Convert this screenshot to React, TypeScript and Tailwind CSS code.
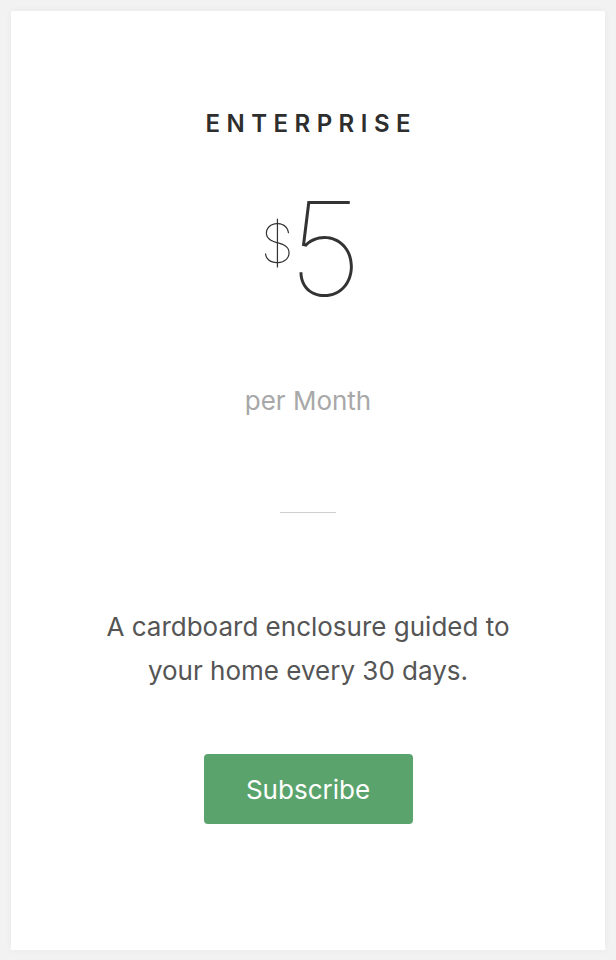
import React from 'react';

const App: React.FC = () => {
    return (
        <div className="min-h-[960px] w-full bg-[#f2f2f2] px-[11px] py-[11px]" style={{ fontFamily: 'Inter, "Liberation Sans", sans-serif' }}>
            <div className="flex h-[939px] flex-col items-center bg-white pt-[101px] shadow-[0_0_8px_rgba(0,0,0,0.04)]">
                <h2 className="pl-[0.27em] text-[24px] font-semibold leading-none tracking-[0.27em] text-[#2e2e2e]">
                    ENTERPRISE
                </h2>
                <div className="mt-[47px] ml-[7px] flex items-start text-[#333]">
                    <span className="mt-[34px] text-[54px] font-thin leading-none tracking-[-0.1em]">$</span>
                    <span className="text-[131px] font-thin leading-none">5</span>
                </div>
                <p className="mt-[74px] text-[26px] leading-none text-[#a8a8a8]">per Month</p>
                <div className="mt-[98px] h-px w-[56px] bg-[#cfcfcf]" />
                <p className="mt-[92px] text-center text-[26px] leading-[44px] text-[#555]">
                    A cardboard enclosure guided to
                    <br />
                    your home every 30 days.
                </p>
                <button
                    type="button"
                    className="mt-[61px] h-[70px] w-[209px] rounded-[4px] bg-[#5aa36c] text-[26px] text-white"
                >
                    Subscribe
                </button>
            </div>
        </div>
    );
};

export default App;
